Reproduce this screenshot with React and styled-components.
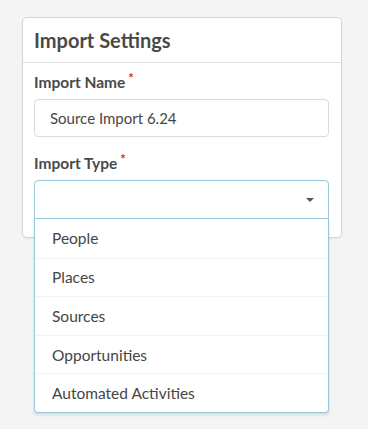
import React from "react";
import styled, { createGlobalStyle } from "styled-components";

const Global = createGlobalStyle`
  html, body { margin: 0; padding: 0; background: #f4f4f4; }
  body { font-family: Lato, "Open Sans", sans-serif; color: #484848; }
  * { box-sizing: border-box; }
`;

const Page = styled.div`
  padding: 17px 0 0 22px;
  min-height: 429px;
`;

const Card = styled.div`
  width: 320px;
  background: #fff;
  border: 1px solid #d6d6d6;
  border-radius: 5px;
  box-shadow: 0 1px 2px rgba(0, 0, 0, 0.06);
`;

const CardHeader = styled.div`
  height: 45px;
  display: flex;
  align-items: center;
  padding: 0 11px;
  border-bottom: 1px solid #e2e2e2;
  font-size: 20px;
  line-height: 24px;
  font-weight: 700;
  color: #494949;
`;

const CardBody = styled.div`
  padding: 10px 12px 18px 11px;
`;

const Field = styled.div`
  & + & { margin-top: 17px; }
`;

const Label = styled.div`
  font-size: 15.5px;
  line-height: 18px;
  font-weight: 700;
  color: #4a4a4a;
  margin-bottom: 8px;
`;

const Required = styled.span`
  color: #db2828;
  font-size: 13px;
  margin-left: 3px;
  vertical-align: 5px;
  line-height: 0;
`;

const Input = styled.div`
  height: 38px;
  border: 1px solid #dcdcdc;
  border-radius: 4px;
  display: flex;
  align-items: center;
  padding: 0 15px;
  font-size: 15px;
  color: #474747;
`;

const SelectWrap = styled.div`
  position: relative;
`;

const SelectBox = styled.div`
  height: 39px;
  border: 1px solid #96c8da;
  border-radius: 4px 4px 0 0;
  display: flex;
  align-items: center;
  justify-content: flex-end;
  padding-right: 14px;
`;

const Caret = styled.span`
  width: 0;
  height: 0;
  border-left: 4px solid transparent;
  border-right: 4px solid transparent;
  border-top: 4px solid #555;
`;

const Menu = styled.div`
  position: absolute;
  left: 0;
  right: 0;
  top: 100%;
  background: #fff;
  border: 1px solid #96c8da;
  border-top: 0;
  border-radius: 0 0 4px 4px;
  box-shadow: 0 2px 3px rgba(34, 36, 38, 0.12);
`;

const Item = styled.div`
  height: 38.6px;
  display: flex;
  align-items: center;
  padding: 0 17px;
  font-size: 15.5px;
  color: #454545;
  & + & { border-top: 1px solid #f3f3f3; }
`;

const options = ["People", "Places", "Sources", "Opportunities", "Automated Activities"];

export default function App() {
  return (
    <>
      <Global />
      <Page>
        <Card>
          <CardHeader>Import Settings</CardHeader>
          <CardBody>
            <Field>
              <Label>Import Name<Required>*</Required></Label>
              <Input>Source Import 6.24</Input>
            </Field>
            <Field>
              <Label>Import Type<Required>*</Required></Label>
              <SelectWrap>
                <SelectBox><Caret /></SelectBox>
                <Menu>
                  {options.map((o) => (
                    <Item key={o}>{o}</Item>
                  ))}
                </Menu>
              </SelectWrap>
            </Field>
          </CardBody>
        </Card>
      </Page>
    </>
  );
}
